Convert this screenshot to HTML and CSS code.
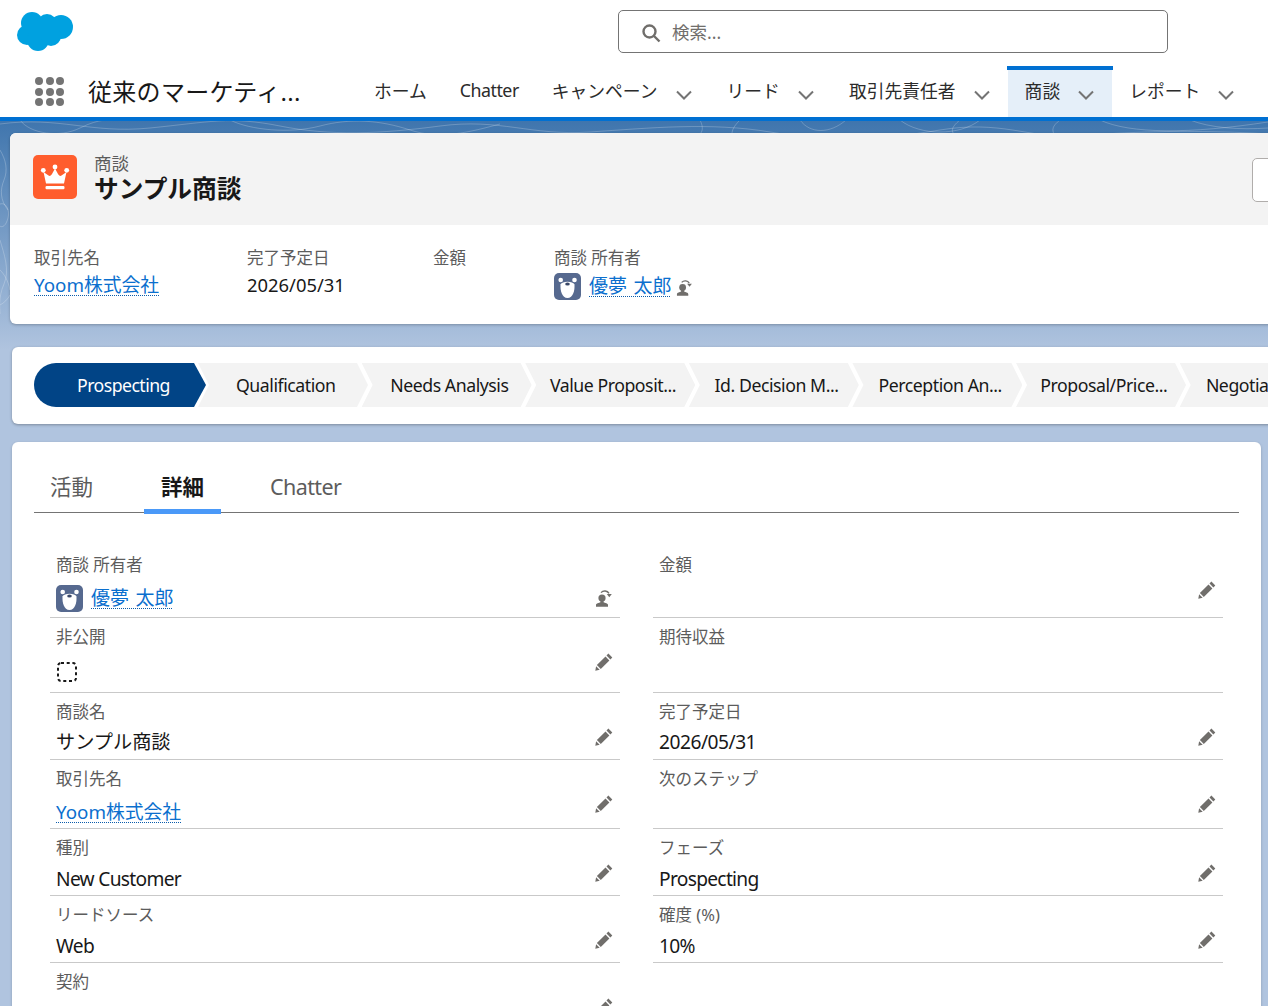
FILE: index.html
```html
<!DOCTYPE html>
<html lang="ja">
<head>
    <meta charset="UTF-8">
    <title>サンプル商談</title>
    <link rel="stylesheet" href="styles.css">
</head>
<body>
    <svg width="0" height="0" class="defs">
        <symbol id="pencil" viewBox="0 0 18 18">
            <path d="M13.4 .6l3.9 3.9-1.9 1.9-3.9-3.9zM10.5 3.5l3.9 3.9-8.6 8.6-3.9-3.9zM1.1 13.2l3.6 3.6-4.4 1z"/>
        </symbol>
        <symbol id="chev" viewBox="0 0 16 10">
            <path d="M1 1.5l7 7 7-7" fill="none" stroke="#747474" stroke-width="2"/>
        </symbol>
        <symbol id="owner" viewBox="0 0 18 18">
            <circle cx="7" cy="9" r="3.6"/>
            <path d="M1 17.8v-2c0-1.5 3-2 4.400-2.600v-1.500h3.200v1.500c1.400.6 4.400 1.100 4.400 2.600v2z"/>
            <path d="M6 3.600c2.400-2.600 6.400-2 8 .8" fill="none" stroke="#706e6b" stroke-width="1.400"/>
            <path d="M11.800 5h5l-2.500 3.200z"/>
        </symbol>
        <symbol id="bear" viewBox="0 0 27 27">
            <rect width="27" height="27" rx="5" fill="#56698f"/>
            <circle cx="6.700" cy="7" r="2.300" fill="#fff"/>
            <circle cx="20.500" cy="7" r="2.300" fill="#fff"/>
            <path d="M6.500 11.500c1-2 3.500-2.800 7-2.800s6 .8 7 2.800c.4 6-1.500 13.500-7 13.500S6.100 17.500 6.500 11.500z" fill="#fff"/>
            <ellipse cx="13.500" cy="11" rx="2.300" ry="1.600" fill="#3a4868"/>
        </symbol>
    </svg>

    <div class="band">
        <svg width="1268" height="230" viewBox="0 0 1268 230" fill="none" stroke="#fff" stroke-opacity=".22">
            <path d="M0 4c60-8 90 10 150 4s80-12 130-2 100 8 160 0 90 10 150 6 120-10 180 0 110 8 170-2 90 8 130 6 100-8 200-2"/>
            <path d="M20 0c10 14 40 18 60 8s30-8 40-8"/>
            <path d="M230 0c20 10 60 14 90 6s60-6 90 4 60 2 90-6"/>
            <path d="M700 0c4 8 2 12 0 14M740 0c-6 6-8 10-8 14M800 0c10 14 30 14 46 0M900 0c20 16 60 16 80 0M1100 0c30 14 90 14 168 2"/>
            <path d="M960 0c-10 8-8 12-6 14M1060 0c-8 6-8 10-6 14M1190 0c20 8 50 10 78 8"/>
            <path d="M0 30c6 10 8 20 4 30s-4 20 4 30"/>
            <path d="M0 84c6-2 10 6 8 14s-6 10-8 8"/>
            <path d="M0 120c4 14 10 30 4 44s-4 24-4 30"/>
            <path d="M0 150c4 4 8 10 10 20M0 185c4-2 8-6 10-10"/>
        </svg>
    </div>

    <header class="top">
        <div class="top-row">
            <svg class="logo" width="56" height="39" viewBox="0 0 56 39" fill="#00a1e0">
                <circle cx="15" cy="11" r="11"/>
                <circle cx="30" cy="12" r="10"/>
                <circle cx="44" cy="15" r="12"/>
                <circle cx="10" cy="23" r="10"/>
                <circle cx="21" cy="28" r="11"/>
                <circle cx="34" cy="24" r="10"/>
                <rect x="12" y="10" width="30" height="16"/>
            </svg>
            <div class="search">
                <svg width="20" height="20" viewBox="0 0 20 20" fill="none" stroke="#706e6b" stroke-width="2.400">
                    <circle cx="8.500" cy="8.500" r="6"/>
                    <path d="M13 13l5.500 5.500"/>
                </svg>
                <span>検索...</span>
            </div>
        </div>
        <nav class="nav">
            <div class="launcher">
                <i></i><i></i><i></i><i></i><i></i><i></i><i></i><i></i><i></i>
            </div>
            <div class="app-name">従来のマーケティ...</div>
            <div class="nav-items">
                <div class="nav-item nav-plain">ホーム</div>
                <div class="nav-item nav-plain nav-latin">Chatter</div>
                <div class="nav-item">キャンペーン<svg><use href="#chev"/></svg></div>
                <div class="nav-item">リード<svg><use href="#chev"/></svg></div>
                <div class="nav-item">取引先責任者<svg><use href="#chev"/></svg></div>
                <div class="nav-item active">商談<svg><use href="#chev"/></svg></div>
                <div class="nav-item">レポート<svg><use href="#chev"/></svg></div>
            </div>
        </nav>
    </header>

    <main class="page">
        <section class="highlights">
            <div class="hl-head">
                <div class="hl-icon">
                    <svg width="44" height="44" viewBox="0 0 44 44" fill="#fff">
                        <circle cx="10.300" cy="15.300" r="2.400"/>
                        <circle cx="22" cy="12" r="2.400"/>
                        <circle cx="33.700" cy="15.300" r="2.400"/>
                        <path d="M10.500 17l5 3.500c1.500 1 2.500 0 3.500-1.500l3-5.500 3 5.500c1 1.500 2 2.500 3.500 1.500l5-3.500-2.500 11.500h-18z"/>
                        <rect x="12.500" y="31" width="19" height="3.200" rx="1.200"/>
                    </svg>
                </div>
                <div class="hl-title">
                    <div class="hl-type">商談</div>
                    <h1>サンプル商談</h1>
                </div>
                <div class="hl-btn"></div>
            </div>
            <div class="hl-fields">
                <div class="hl-field hl-account">
                    <div class="label">取引先名</div>
                    <a class="link">Yoom株式会社</a>
                </div>
                <div class="hl-field hl-date">
                    <div class="label">完了予定日</div>
                    <div class="hl-value">2026/05/31</div>
                </div>
                <div class="hl-field hl-amount">
                    <div class="label">金額</div>
                </div>
                <div class="hl-field">
                    <div class="label">商談 所有者</div>
                    <div class="owner-line">
                        <svg class="avatar"><use href="#bear"/></svg>
                        <a class="link link-name">優夢 太郎</a>
                        <svg class="owner-small"><use href="#owner"/></svg>
                    </div>
                </div>
            </div>
        </section>

        <section class="path">
            <div class="stage current">Prospecting</div>
            <div class="stage">Qualification</div>
            <div class="stage">Needs Analysis</div>
            <div class="stage">Value Proposit...</div>
            <div class="stage">Id. Decision M...</div>
            <div class="stage">Perception An...</div>
            <div class="stage">Proposal/Price...</div>
            <div class="stage">Negotiation/R...</div>
        </section>

        <section class="detail">
            <div class="tabs">
                <div class="tab tab-activity">活動</div>
                <div class="tab tab-detail">詳細</div>
                <div class="tab tab-chatter">Chatter</div>
            </div>
            <div class="fields">
                <div class="field">
                    <div class="field-body">
                        <div class="label">商談 所有者</div>
                        <div class="owner-line owner-line-big">
                            <svg class="avatar"><use href="#bear"/></svg>
                            <a class="link link-name">優夢 太郎</a>
                        </div>
                    </div>
                    <svg class="action action-owner"><use href="#owner"/></svg>
                </div>
                <div class="field">
                    <div class="field-body"><div class="label">金額</div></div>
                    <svg class="action"><use href="#pencil"/></svg>
                </div>

                <div class="field">
                    <div class="field-body">
                        <div class="label">非公開</div>
                        <svg class="checkbox" width="20" height="20" viewBox="0 0 20 20">
                            <rect x="1" y="1" width="18" height="18" rx="3" fill="none" stroke="#181818" stroke-width="2" stroke-dasharray="3 2.700"/>
                        </svg>
                    </div>
                    <svg class="action"><use href="#pencil"/></svg>
                </div>
                <div class="field">
                    <div class="field-body"><div class="label">期待収益</div></div>
                </div>

                <div class="field">
                    <div class="field-body">
                        <div class="label">商談名</div>
                        <div class="value">サンプル商談</div>
                    </div>
                    <svg class="action"><use href="#pencil"/></svg>
                </div>
                <div class="field">
                    <div class="field-body">
                        <div class="label">完了予定日</div>
                        <div class="value value-date">2026/05/31</div>
                    </div>
                    <svg class="action"><use href="#pencil"/></svg>
                </div>

                <div class="field">
                    <div class="field-body">
                        <div class="label">取引先名</div>
                        <div class="value value-link"><a class="link">Yoom株式会社</a></div>
                    </div>
                    <svg class="action"><use href="#pencil"/></svg>
                </div>
                <div class="field">
                    <div class="field-body"><div class="label">次のステップ</div></div>
                    <svg class="action"><use href="#pencil"/></svg>
                </div>

                <div class="field">
                    <div class="field-body">
                        <div class="label">種別</div>
                        <div class="value value-latin">New Customer</div>
                    </div>
                    <svg class="action"><use href="#pencil"/></svg>
                </div>
                <div class="field">
                    <div class="field-body">
                        <div class="label">フェーズ</div>
                        <div class="value value-latin">Prospecting</div>
                    </div>
                    <svg class="action"><use href="#pencil"/></svg>
                </div>

                <div class="field">
                    <div class="field-body">
                        <div class="label">リードソース</div>
                        <div class="value value-latin">Web</div>
                    </div>
                    <svg class="action"><use href="#pencil"/></svg>
                </div>
                <div class="field">
                    <div class="field-body">
                        <div class="label">確度 (%)</div>
                        <div class="value value-latin">10%</div>
                    </div>
                    <svg class="action"><use href="#pencil"/></svg>
                </div>

                <div class="field field-last">
                    <div class="field-body"><div class="label">契約</div></div>
                    <svg class="action"><use href="#pencil"/></svg>
                </div>
            </div>
        </section>
    </main>
</body>
</html>
```

FILE: styles.css
```css
html, body {
    height: 1006px;
    overflow: hidden;
}

body {
    margin: 0;
    position: relative;
    background-color: #b0c4df;
    font-family: "Noto Sans", "Noto Sans CJK JP", sans-serif;
    color: #181818;
}

.defs {
    position: absolute;
}

.band {
    position: absolute;
    top: 120px;
    left: 0;
    width: 100%;
    height: 230px;
    background: linear-gradient(#3f75ad, #b0c4df);
}

/* header */

.top {
    position: relative;
    height: 117px;
    background-color: #fff;
    border-bottom: 4px solid #0070d2;
}

.top-row {
    height: 66px;
    display: flex;
    align-items: flex-start;
}

.logo {
    margin: 12px 0 0 17px;
}

.search {
    margin: 10px 0 0 545px;
    width: 550px;
    height: 43px;
    border: 1px solid #747474;
    border-radius: 5px;
    display: flex;
    align-items: center;
    padding-left: 22px;
    box-sizing: border-box;
    font-size: 17.500px;
    color: #706e6b;
    gap: 11px;
    flex-shrink: 0;
}

.search svg {
    margin-top: 2px;
}

.search span {
    line-height: 24px;
}

.nav {
    height: 51px;
    display: flex;
}

.launcher {
    width: 29px;
    height: 29px;
    margin: 11px 0 0 35px;
    display: grid;
    grid-template-columns: repeat(3, 8px);
    grid-template-rows: repeat(3, 8px);
    gap: 2.500px;
}

.launcher i {
    background-color: #747474;
    border-radius: 50%;
}

.app-name {
    width: 269px;
    margin-left: 24px;
    font-size: 24px;
    letter-spacing: .3px;
    line-height: 52px;
    color: #181818;
    white-space: nowrap;
}

.nav-items {
    display: flex;
}

.nav-item {
    display: flex;
    align-items: center;
    gap: 18px;
    padding: 0 18px 4px 17px;
    height: 51px;
    box-sizing: border-box;
    font-size: 17.800px;
    color: #2b2b2b;
    position: relative;
}

.nav-plain {
    padding-right: 16px;
}

.nav-latin {
    letter-spacing: -.5px;
}

.nav-item svg {
    width: 16px;
    height: 10px;
    margin-top: 11px;
}

.nav-item.active {
    background-color: #e5eff9;
}

.nav-item.active::before {
    content: "";
    position: absolute;
    top: 0;
    left: -1px;
    right: -1px;
    height: 4px;
    background-color: #0070d2;
}

/* highlights panel */

.page {
    position: relative;
}

.highlights {
    width: 1300px;
    height: 191px;
    margin: 12px 0 0 10px;
    background-color: #fff;
    border-radius: 6px;
    box-shadow: 0 1px 3px rgba(0, 0, 0, .25);
    overflow: hidden;
}

.hl-head {
    height: 92px;
    background-color: #f3f3f3;
    display: flex;
    position: relative;
}

.hl-icon {
    width: 44px;
    height: 44px;
    margin: 22px 0 0 23px;
    background-color: #ff5d2d;
    border-radius: 5px;
}

.hl-title {
    margin: 19px 0 0 17px;
}

.hl-type {
    font-size: 17.500px;
    line-height: 22px;
    color: #5c5c5c;
}

h1 {
    margin: 1px 0 0;
    font-size: 24.700px;
    line-height: 27px;
    font-weight: 700;
    color: #181818;
}

.hl-btn {
    position: absolute;
    left: 1242px;
    top: 25px;
    width: 60px;
    height: 42px;
    background-color: #fff;
    border: 1px solid #b0adab;
    border-radius: 5px;
}

.hl-fields {
    display: flex;
    padding: 22px 0 0 24px;
}

.hl-field {
    flex-shrink: 0;
}

.hl-account {
    width: 213px;
}

.hl-date {
    width: 186px;
}

.hl-amount {
    width: 121px;
}

.label {
    font-size: 16.500px;
    line-height: 22px;
    color: #5c5c5c;
}

.hl-value {
    font-size: 18.400px;
    line-height: 28px;
    margin-top: 2px;
    color: #181818;
}

.link {
    color: #0b6fce;
    font-size: 18.800px;
    line-height: 26px;
    text-decoration: underline dotted #0b5cab 1px;
    text-underline-offset: 3px;
}

.link-name {
    font-size: 19px;
    word-spacing: 1.500px;
}

.hl-account .link {
    display: inline-block;
    margin-top: 3px;
}

.owner-line {
    display: flex;
    align-items: center;
    gap: 8px;
    margin-top: 3px;
    height: 28px;
}

.avatar {
    width: 27px;
    height: 27px;
}

.owner-small {
    width: 17px;
    height: 17px;
    fill: #706e6b;
    margin-left: -3px;
    margin-top: 3px;
}

/* path */

.path {
    width: 1300px;
    height: 77px;
    margin: 23px 0 0 12px;
    padding: 16px 0 0 22px;
    box-sizing: border-box;
    background-color: #fff;
    border-radius: 6px;
    box-shadow: 0 1px 3px rgba(0, 0, 0, .3);
    display: flex;
}

.stage {
    flex-shrink: 0;
    width: 170px;
    height: 44px;
    margin-right: -6.400px;
    padding-left: 5.500px;
    box-sizing: border-box;
    background-color: #f3f3f3;
    clip-path: polygon(0 0, calc(100% - 11px) 0, 100% 50%, calc(100% - 11px) 100%, 0 100%, 11px 50%);
    font-size: 17.700px;
    letter-spacing: -.45px;
    line-height: 44px;
    text-align: center;
    white-space: nowrap;
    color: #181818;
}

.stage.current {
    width: 172px;
    margin-right: -8px;
    padding-left: 7px;
    background-color: #014486;
    color: #fff;
    letter-spacing: -.55px;
    border-radius: 22px 0 0 22px;
    clip-path: polygon(0 0, calc(100% - 12px) 0, 100% 50%, calc(100% - 12px) 100%, 0 100%);
}

/* details */

.detail {
    width: 1249px;
    height: 600px;
    margin: 18px 0 0 12px;
    background-color: #fff;
    border-radius: 6px 6px 0 0;
    box-shadow: 0 1px 3px rgba(0, 0, 0, .2);
    padding: 0 22px;
    box-sizing: border-box;
}

.tabs {
    display: flex;
    height: 70px;
    border-bottom: 1px solid #747474;
}

.tab {
    font-size: 21.500px;
    line-height: 89px;
    height: 72px;
    color: #5c5c5c;
    box-sizing: border-box;
}

.tab-activity {
    margin-left: 16px;
    width: 94px;
}

.tab-detail {
    width: 77px;
    text-align: center;
    font-weight: 700;
    color: #181818;
    border-bottom: 5px solid #4a99f8;
}

.tab-chatter {
    margin-left: 49px;
    letter-spacing: -.6px;
}

.fields {
    display: grid;
    grid-template-columns: 570px 570px;
    grid-template-rows: 105px 75px 67px 69px 67px 67px 80px;
    column-gap: 33px;
    margin-left: 16px;
}

.field {
    display: flex;
    padding: 0 7px 0 6px;
    border-bottom: 1px solid #c9c9c9;
    box-sizing: border-box;
}

.field:nth-child(-n+2) {
    padding-top: 33px;
}

.field-last {
    border-bottom: none;
}

.field-body {
    flex: 1;
    padding-top: 8px;
}

.action {
    width: 18px;
    height: 18px;
    margin-top: 35px;
    fill: #706e6b;
    flex-shrink: 0;
}

.action-owner {
    margin-top: 43px;
}

.value {
    font-size: 19.200px;
    line-height: 26px;
    margin-top: 6px;
    color: #181818;
}

.value-date {
    letter-spacing: -.5px;
}

.value-latin {
    margin-top: 7px;
    letter-spacing: -.7px;
}

.value-link {
    margin-top: 9px;
}

.owner-line-big {
    margin-top: 8px;
}

.checkbox {
    display: block;
    margin: 14px 0 0 1px;
}
```
